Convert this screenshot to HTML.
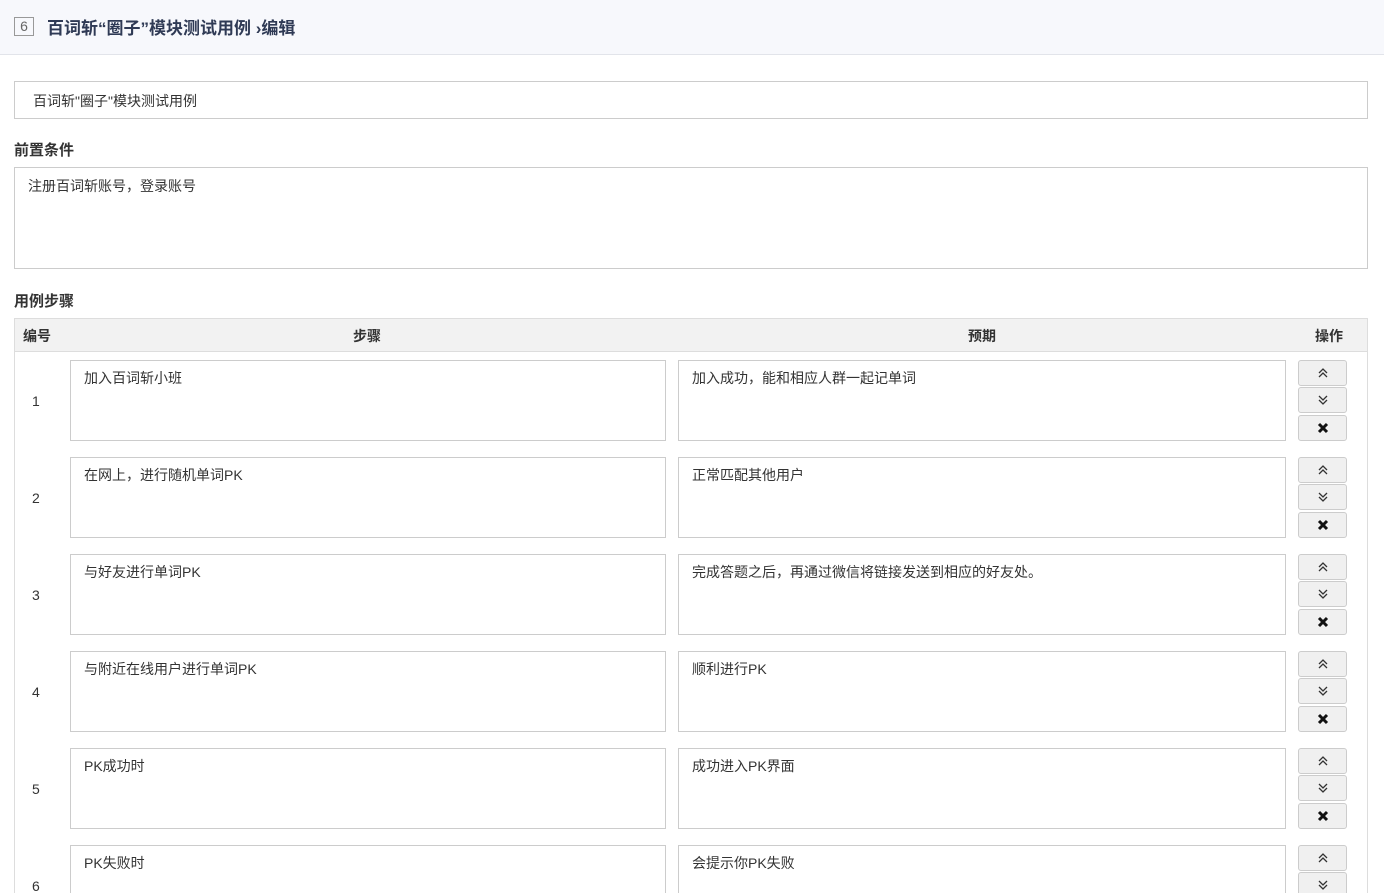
<!DOCTYPE html><html><head><meta charset="utf-8"><style>
*{box-sizing:border-box}html,body{margin:0;width:1384px;height:893px;overflow:hidden}body{background:#fff;font-family:"Liberation Sans","Noto Sans CJK SC",sans-serif;font-size:14px;color:#333;position:relative}
.hd{position:absolute;left:0;top:0;width:1384px;height:55px;background:#f7f8fc;border-bottom:1px solid #e2e4ea}
.num{position:absolute;left:14px;top:17px;width:20px;height:19px;border:1px solid #999;color:#666;font-size:14px;text-align:center;line-height:17px}
.tt{position:absolute;left:47px;top:14px;font-size:17px;font-weight:bold;color:#2f3a55}
.box{position:absolute;border:1px solid #ccc;background:#fff;padding:9px 13px;font-size:14px;color:#333}
.lbl{position:absolute;left:14px;font-weight:bold;font-size:15px;color:#333}
.tbl{position:absolute;left:14px;top:318px;width:1354px;height:600px;border:1px solid #ddd}
.th{position:absolute;top:0;left:0;width:100%;height:33px;background:#f2f2f2;border-bottom:1px solid #ddd;font-weight:bold}
.th span{position:absolute;top:7px}
.btn{position:absolute;width:49px;height:26px;border:1px solid #ccc;border-radius:3px;background:#f0f0f0;text-align:center;line-height:24px;font-size:12px;color:#333}
.btn svg{position:absolute;left:18px;top:6px}
</style></head><body>
<div class="hd"><div class="num">6</div><div class="tt">百词斩“圈子”模块测试用例 ›编辑</div></div>
<div class="box" style="left:14px;top:81px;width:1354px;height:38px;padding-left:18px">百词斩"圈子"模块测试用例</div>
<div class="lbl" style="top:139px">前置条件</div>
<div class="box" style="left:14px;top:167px;width:1354px;height:102px;padding:8px 13px">注册百词斩账号，登录账号</div>
<div class="lbl" style="top:290px">用例步骤</div>
<div class="tbl"><div class="th"><span style="left:8px">编号</span><span style="left:338px">步骤</span><span style="left:953px">预期</span><span style="left:1300px">操作</span></div></div>
<div id="rows"></div>
<script>
var s=["加入百词斩小班","在网上，进行随机单词PK","与好友进行单词PK","与附近在线用户进行单词PK","PK成功时","PK失败时"];
var e=["加入成功，能和相应人群一起记单词","正常匹配其他用户","完成答题之后，再通过微信将链接发送到相应的好友处。","顺利进行PK","成功进入PK界面","会提示你PK失败"];
var up='<svg width="12" height="12" viewBox="0 0 12 12"><path d="M2 6L6 2L10 6M2 10L6 6L10 10" fill="none" stroke="#333" stroke-width="1.3"/></svg>';
var dn='<svg width="12" height="12" viewBox="0 0 12 12"><path d="M2 2L6 6L10 2M2 6L6 10L10 6" fill="none" stroke="#333" stroke-width="1.3"/></svg>';
var x='<svg width="12" height="12" viewBox="0 0 12 12"><path d="M2 2L10 10M10 2L2 10" fill="none" stroke="#111" stroke-width="3"/></svg>';
var h="";
for(var i=0;i<6;i++){var y=360+97*i;
h+='<div style="position:absolute;left:32px;top:'+(y+33)+'px">'+(i+1)+'</div>';
h+='<div class="box" style="left:70px;top:'+y+'px;width:596px;height:81px;padding:7px 13px">'+s[i]+'</div>';
h+='<div class="box" style="left:678px;top:'+y+'px;width:608px;height:81px;padding:7px 13px">'+e[i]+'</div>';
h+='<div class="btn" style="left:1298px;top:'+y+'px">'+up+'</div><div class="btn" style="left:1298px;top:'+(y+27)+'px">'+dn+'</div>';
if(i<5)h+='<div class="btn" style="left:1298px;top:'+(y+55)+'px">'+x+'</div>';}
document.getElementById('rows').innerHTML=h;
</script>
</body></html>
